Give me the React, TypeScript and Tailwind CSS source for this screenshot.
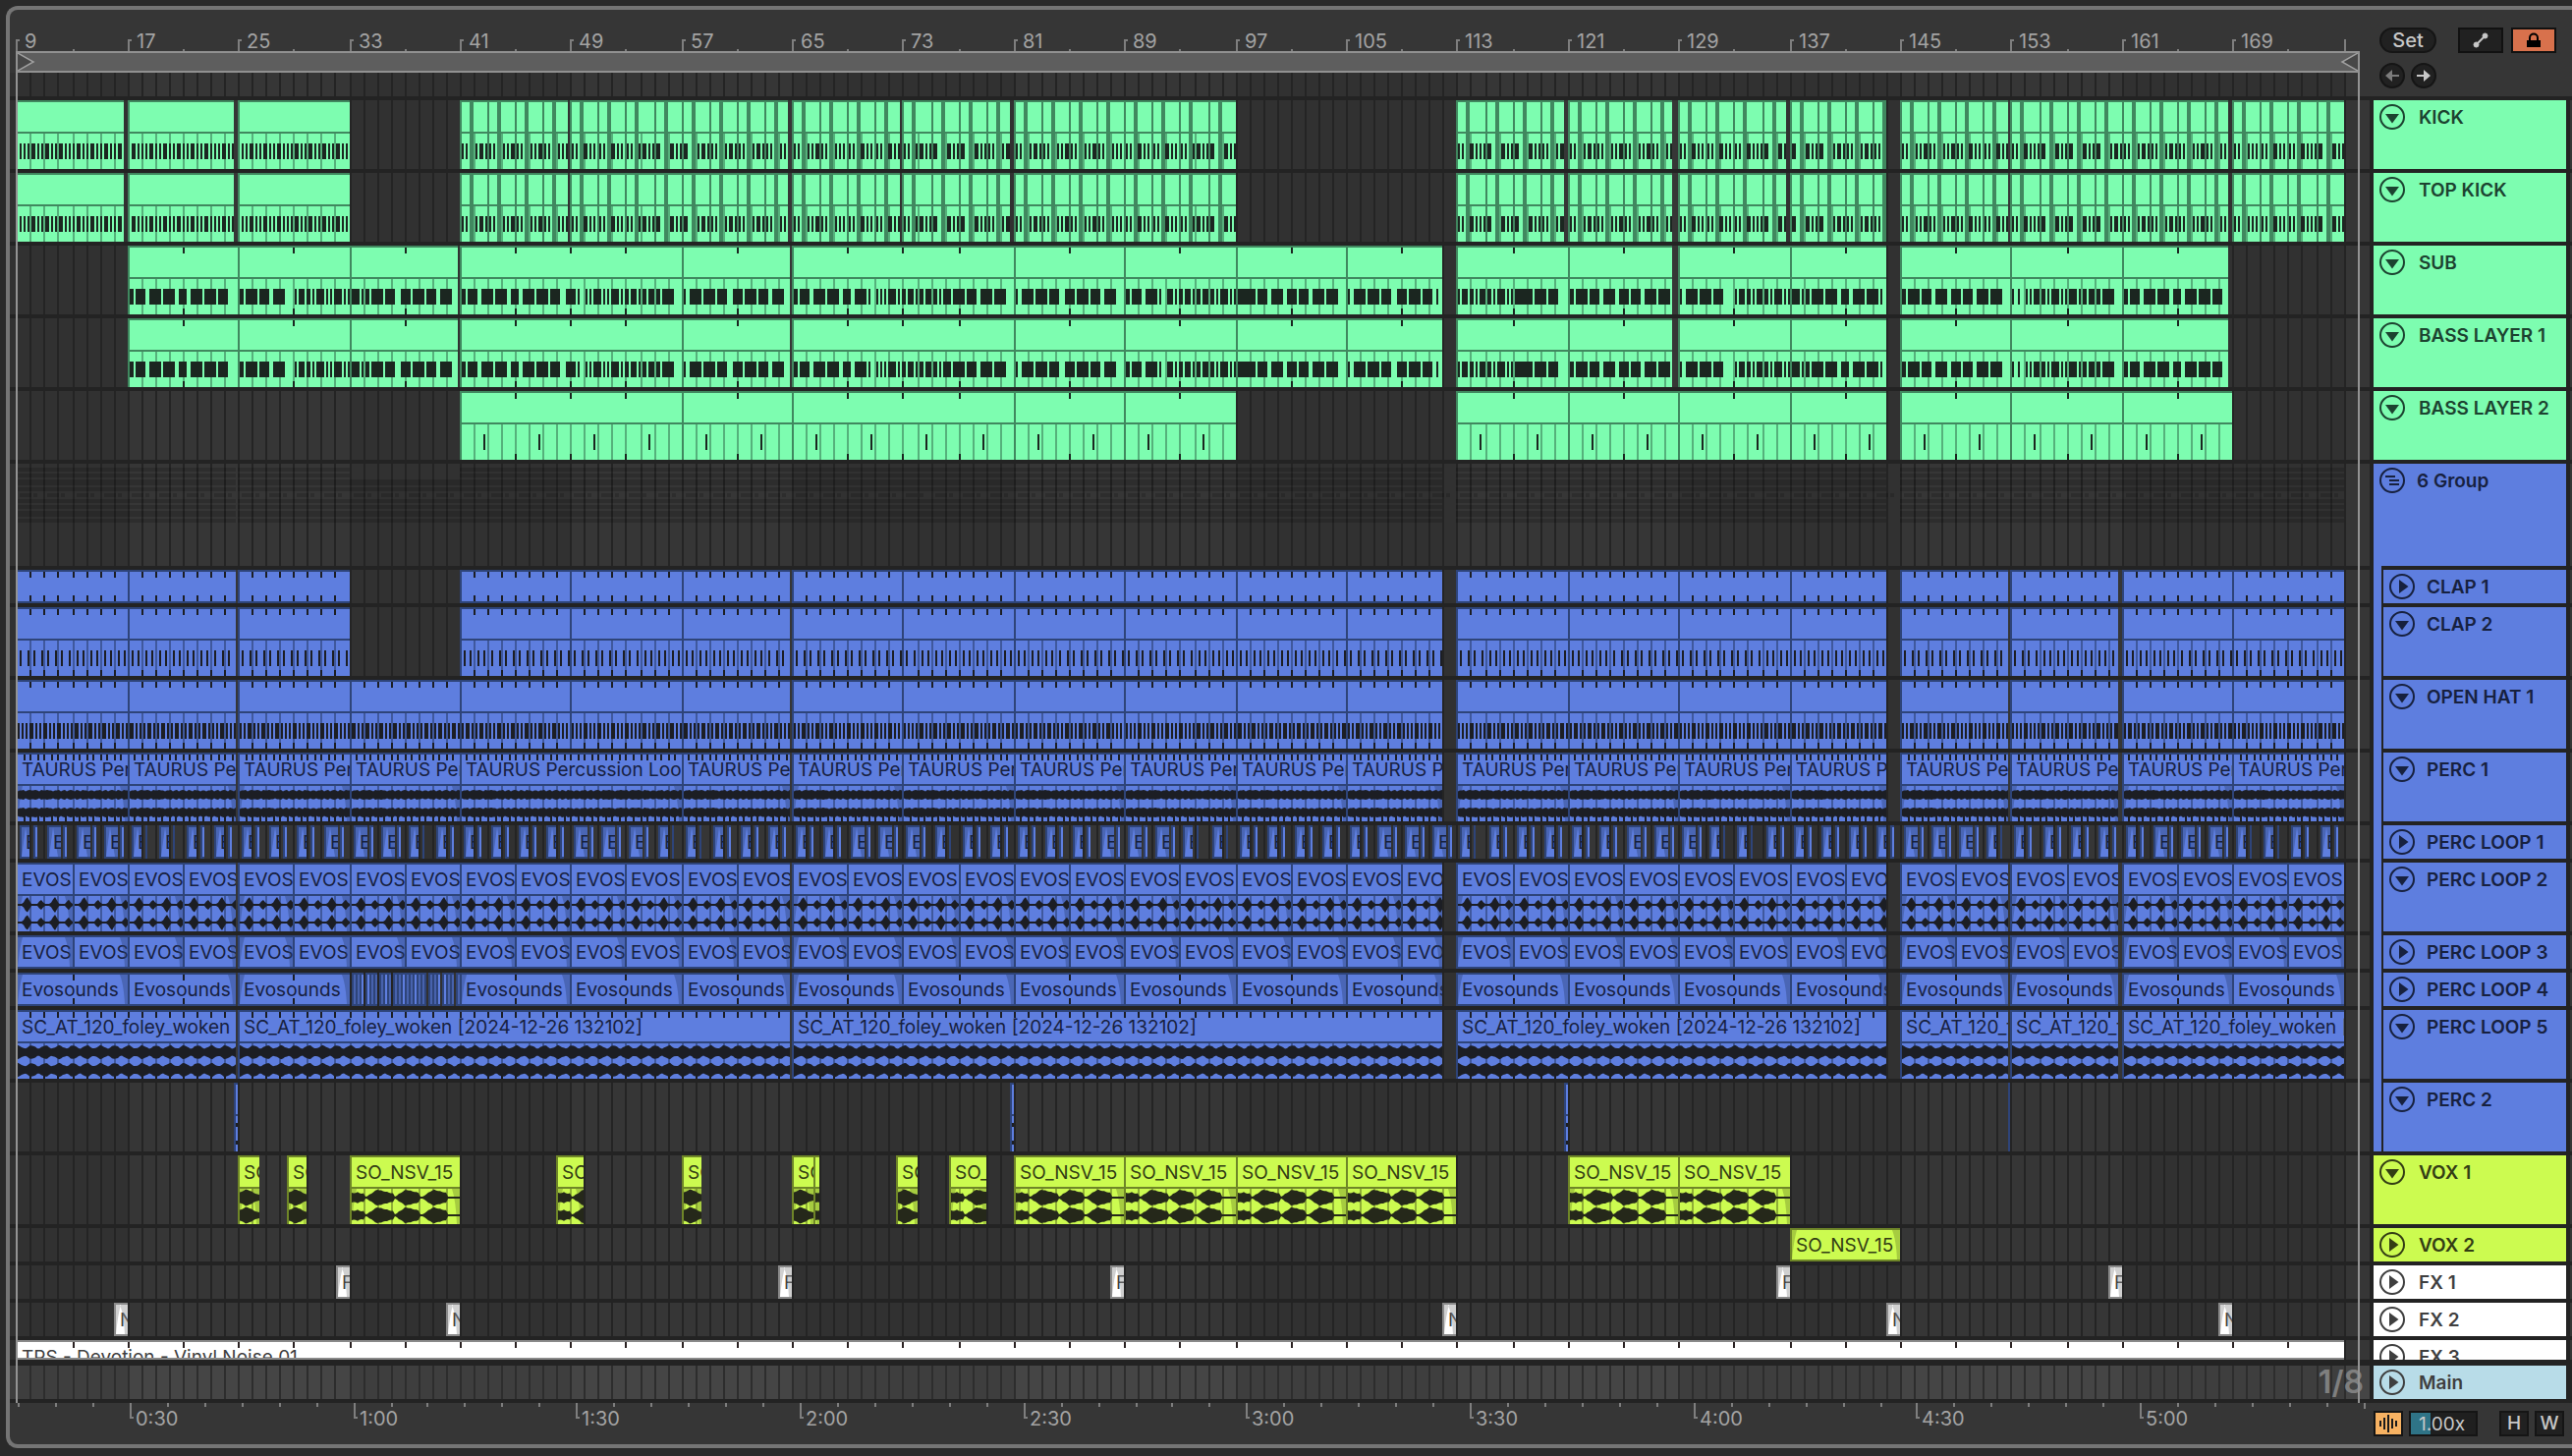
import { createContext, useContext, useLayoutEffect, useRef, useState } from 'react'
import type { ReactNode } from 'react'

type Kind = 'none' | 'kick' | 'chopped' | 'sub' | 'bass' | 'clap' | 'hat' | 'perc' | 'shaker' | 'foley' | 'vox' | 'stab'
type Rect = [number, number, number, number]

interface Theme {
  panel: string
  text: string
  edge: string
  edgeFill: string
  ink: string
  stroke: string
}

interface Run {
  bars: number[]
  kind?: Kind
}

interface Track {
  name: string
  theme: Theme
  height: string
  open?: boolean
  label?: string
  runs: Run[]
  kind?: Kind
  ticks?: number
  fades?: boolean
  extra?: 'slices' | 'chops' | 'overview'
}

const GREEN: Theme = { panel: 'bg-[#7dfdb0]', text: 'text-[#1c4330]', edge: 'border-[#40885f]', edgeFill: 'fill-[#40885f]', ink: 'fill-[#1b2620]', stroke: 'border-[#1c4330]' }
const BLUE: Theme = { panel: 'bg-[#5e7edf]', text: 'text-[#17213f]', edge: 'border-[#2e4479]', edgeFill: 'fill-[#2e4479]', ink: 'fill-[#1c1e24]', stroke: 'border-[#17213f]' }
const LIME: Theme = { panel: 'bg-[#ccfb50]', text: 'text-[#333d14]', edge: 'border-[#6f8628]', edgeFill: 'fill-[#6f8628]', ink: 'fill-[#25281a]', stroke: 'border-[#333d14]' }
const WHITE: Theme = { panel: 'bg-white', text: 'text-[#3f3f3f]', edge: 'border-[#8a8a8a]', edgeFill: 'fill-[#8a8a8a]', ink: 'fill-[#2b2222]', stroke: 'border-[#3f3f3f]' }
const PALE: Theme = { ...WHITE, panel: 'bg-[#b8dce8]' }

const TALL = 'h-[70px]'
const SHORT = 'h-[34px]'

// every `step` bars from a to b, closing on b
function steps(a: number, b: number, step: number): number[] {
  const out: number[] = []
  for (let v = a; v < b; v += step) out.push(v)
  return [...out, b]
}

function each(step: number): Run[] {
  return [
    { bars: steps(9, 24.85, step) },
    { bars: steps(25, 64.85, step) },
    { bars: steps(65, 112, step) },
    { bars: steps(113, 144, step) },
    { bars: steps(145, 152.8, step) },
    { bars: steps(153, 160.7, step) },
    { bars: steps(161, 177, step) },
  ]
}

const KICKS: Run[] = [
  { bars: [9, 16.75] },
  { bars: [17, 24.7] },
  { bars: [25, 33] },
  { bars: [41, 48.85], kind: 'chopped' },
  { bars: [49, 57, 64.7], kind: 'chopped' },
  { bars: [65, 72.85], kind: 'chopped' },
  { bars: [73, 80.7], kind: 'chopped' },
  { bars: [81, 89, 97], kind: 'chopped' },
  { bars: [113, 120.8], kind: 'chopped' },
  { bars: [121, 128.5], kind: 'chopped' },
  { bars: [129, 136.7], kind: 'chopped' },
  { bars: [137, 144], kind: 'chopped' },
  { bars: [145, 152.8], kind: 'chopped' },
  { bars: [153, 161, 168.7], kind: 'chopped' },
  { bars: [169, 177], kind: 'chopped' },
]

const SUBS: Run[] = [
  { bars: [17, 25, 33, 40.85] },
  { bars: [41, 57, 64.85] },
  { bars: [65, 81, 89, 97, 105, 112] },
  { bars: [113, 121, 128.5] },
  { bars: [129, 137, 144] },
  { bars: [145, 153, 161, 168.7] },
]

const CLAPS: Run[] = [{ bars: [9, 17, 24.85] }, { bars: [25, 33] }, { bars: steps(41, 64.85, 8) }, ...each(8).slice(2)]

const TRACKS: Track[] = [
  { name: 'KICK', theme: GREEN, height: TALL, open: true, runs: KICKS, kind: 'kick' },
  { name: 'TOP KICK', theme: GREEN, height: TALL, open: true, runs: KICKS, kind: 'kick' },
  { name: 'SUB', theme: GREEN, height: TALL, open: true, runs: SUBS, kind: 'sub', ticks: 4 },
  { name: 'BASS LAYER 1', theme: GREEN, height: TALL, open: true, runs: SUBS, kind: 'sub', ticks: 4 },
  {
    name: 'BASS LAYER 2',
    theme: GREEN,
    height: TALL,
    open: true,
    kind: 'bass',
    ticks: 4,
    runs: [{ bars: [41, 57, 65, 81, 89, 97] }, { bars: [113, 121, 129, 137, 144] }, { bars: [145, 153, 161, 169] }],
  },
]

const GROUP: Track = { name: '6 Group', theme: BLUE, height: 'h-[104px]', open: true, runs: [], extra: 'overview' }

const GROUPED: Track[] = [
  { name: 'CLAP 1', theme: BLUE, height: SHORT, runs: CLAPS, ticks: 1 },
  { name: 'CLAP 2', theme: BLUE, height: TALL, open: true, runs: CLAPS, kind: 'clap', ticks: 1 },
  { name: 'OPEN HAT 1', theme: BLUE, height: TALL, open: true, runs: each(8), kind: 'hat', ticks: 1 },
  {
    name: 'PERC 1',
    theme: BLUE,
    height: TALL,
    open: true,
    kind: 'perc',
    ticks: 0.5,
    label: 'TAURUS Percussion Loop',
    runs: [{ bars: [9, 17, 24.85] }, { bars: [25, 33, 41, 57, 64.85] }, ...each(8).slice(2)],
  },
  { name: 'PERC LOOP 1', theme: BLUE, height: SHORT, label: 'EVOS', runs: [], extra: 'chops' },
  { name: 'PERC LOOP 2', theme: BLUE, height: TALL, open: true, label: 'EVOS', runs: each(4), kind: 'shaker', fades: true },
  { name: 'PERC LOOP 3', theme: BLUE, height: SHORT, label: 'EVOS', runs: each(4), fades: true },
  { name: 'PERC LOOP 4', theme: BLUE, height: SHORT, label: 'Evosounds', runs: CLAPS, ticks: 4, fades: true, extra: 'slices' },
  {
    name: 'PERC LOOP 5',
    theme: BLUE,
    height: TALL,
    open: true,
    kind: 'foley',
    ticks: 1,
    label: 'SC_AT_120_foley_woken [2024-12-26 132102]',
    runs: [{ bars: [9, 24.85] }, { bars: [25, 64.85] }, { bars: [65, 112] }, { bars: [113, 144] }, { bars: [145, 152.8] }, { bars: [153, 160.7] }, { bars: [161, 177] }],
  },
  {
    name: 'PERC 2',
    theme: BLUE,
    height: TALL,
    open: true,
    kind: 'stab',
    runs: [{ bars: [24.72, 25] }, { bars: [80.72, 81] }, { bars: [120.72, 121] }, { bars: [152.85, 152.98] }],
  },
]

const TAIL: Track[] = [
  {
    name: 'VOX 1',
    theme: LIME,
    height: TALL,
    open: true,
    kind: 'vox',
    label: 'SO_NSV_15',
    runs: [
      { bars: [25, 26.54] },
      { bars: [28.53, 29.95] },
      { bars: [33, 41] },
      { bars: [48, 49.95] },
      { bars: [57, 58.46] },
      { bars: [65, 66.55, 67] },
      { bars: [72.5, 74.07] },
      { bars: [76.34, 79.03] },
      { bars: [81, 89, 97, 105, 113] },
      { bars: [121, 129, 137] },
    ],
  },
  { name: 'VOX 2', theme: LIME, height: SHORT, label: 'SO_NSV_15', runs: [{ bars: [137, 145] }], fades: true },
  {
    name: 'FX 1',
    theme: WHITE,
    height: SHORT,
    label: 'FX',
    fades: true,
    runs: [32.1, 64, 88, 136, 160].map((b) => ({ bars: [b, Math.floor(b) + 1] })),
  },
  {
    name: 'FX 2',
    theme: WHITE,
    height: SHORT,
    label: 'Noise',
    fades: true,
    runs: [16, 40, 112, 144, 168].map((b) => ({ bars: [b, b + 1] })),
  },
  { name: 'FX 3', theme: WHITE, height: 'h-[20px]', label: 'TPS - Devotion - Vinyl Noise 01', runs: [{ bars: [9, 177] }], ticks: 4 },
]

const BASE_WIDTH = 2402
const ScaleContext = createContext(1)

const snap = (v: number) => Math.round(v / 2) * 2

function useTimeline() {
  const scale = useContext(ScaleContext)
  const bar = 14.0985 * scale
  const x = (b: number) => snap(6.65 * scale + (b - 9) * bar)
  return { bar, x, scale }
}

const toPath = (rects: Rect[]) => rects.map(([x, y, w, h]) => `M${x} ${y}h${w}v${h}h${-w}z`).join('')

// note rectangles of a midi clip, relative to its left edge
function notes(kind: Kind, from: number, to: number, x: (b: number) => number): Rect[] {
  const left = x(from) + 2
  const right = x(to)
  const out: Rect[] = []
  const add = (px: number, w: number) => {
    const start = Math.max(px, left)
    const end = Math.min(px + w, right)
    if (end > start) out.push([start - left, 10, end - start, 16])
  }
  const first = Math.floor(from)
  for (let b = first; b < to; b++) {
    for (let q = 0; q < 4; q++) {
      const px = x(b + q / 4)
      if (kind === 'kick') add(px + 4, 2)
      if (kind === 'chopped' && ((b - first) % 2 === 1 || q !== 2)) add(px + 2, 2)
      if (kind === 'hat') add(px + 2, 2)
      if (kind === 'clap' && q % 2 === 0) add(px + 4, 2)
    }
    if (kind === 'bass' && (b - 1) % 4 === 0) add(x(b) + 24, 2)
    if (kind === 'sub') {
      const phase = (b - 29 + 207) % 20.7
      if (phase < 6) {
        for (let q = 0; q < 4; q++) add(x(b + q / 4) + 2, q === b % 4 ? 4 : 2)
      } else {
        add(x(b) - 4, b % 3 === 0 ? 8 : 10)
        if (b % 4 !== 0) add(x(b) + 8, 2)
      }
    }
  }
  return out
}

// half height of the wave at px
function level(kind: Kind, px: number, bar: number, length: number): number {
  const beat = (px % bar) / bar
  const jag = (px / 2) % 3 === 0 ? 1 : 0
  if (kind === 'perc') return (px % (bar / 2)) / (bar / 2) < 0.25 ? 3.5 : 4.5 + jag / 2
  if (kind === 'foley') return 5.2 + 1.6 * Math.cos(beat * Math.PI * 2) + jag / 2
  if (kind === 'shaker') {
    const big = Math.floor(px / bar) % 2 === 0
    return Math.max(1, (big ? 8.5 : 5.5) - Math.abs(beat * bar - 9.5) * (big ? 1.7 : 1.3))
  }
  if (kind === 'vox') {
    if (length < bar * 1.45 && length > 16) return Math.max(3, 8.5 - Math.abs(px - 7) * 0.5) + jag / 2
    if (px < 13) return 5 - Math.abs(px - 5) * 0.2 + jag
    for (const [start, peak, end] of [[15, 26, 42], [45, 55, 69], [73, 83, 97]]) {
      if (px >= start && px <= end) return (px < peak ? 8 - (peak - px) * 0.65 : 8 - (px - peak) * 0.25) + jag / 2
    }
    return 1
  }
  return 2
}

function waveform(kind: Kind, width: number, bar: number): string {
  return [9, 27]
    .map((mid) => {
      const top: string[] = []
      const bottom: string[] = []
      for (let px = 0; px <= width; px += 2) {
        const a = level(kind, px, bar, width)
        top.push(`${px} ${(mid - a).toFixed(1)}`)
        bottom.unshift(`${px} ${(mid + a).toFixed(1)}`)
      }
      return `M${top.join('L')}L${bottom.join('L')}z`
    })
    .join('')
}

function Clip({ track, kind, from, to, first }: { track: Track; kind: Kind; from: number; to: number; first: boolean }) {
  const { x, bar } = useTimeline()
  const { theme } = track
  const left = x(from)
  const width = Math.max(2, x(to) - left)
  const tall = track.height === TALL
  const audio = ['perc', 'shaker', 'foley', 'vox', 'stab'].includes(kind)

  const ticks: number[] = []
  if (track.ticks) {
    for (let b = from + track.ticks; b < to - 0.2; b += track.ticks) ticks.push(x(b) - left - 2)
  }
  const lines: Rect[] = []
  for (let b = Math.floor(from) + 1; b < to - 0.1; b++) lines.push([x(b) - left - 2, 0, 2, 36])

  const cuts: Rect[] = []
  if (kind === 'chopped') {
    for (let b = from; b < to; b += 2) {
      if (b > from) cuts.push([x(b) - left - 2, 0, 2, 68])
      cuts.push([x(b) - left + 8, 0, 4, 68])
    }
  }
  const inner = width - 2
  const fade = (h: number) => `M${inner - 8} 0Q${inner - 4} ${h / 3} ${inner - 3} ${h}H${inner}V0z${first ? `M0 0H5Q2 ${h / 3} 0 ${h}z` : ''}`

  return (
    <div
      className={`absolute top-0 h-full overflow-hidden border-t-2 border-l-2 ${tall ? '' : 'border-b-2'} ${theme.panel} ${theme.edge}`}
      style={{ left, width }}
    >
      <div className={`h-[30px] overflow-hidden pl-1 text-[19px] leading-8 whitespace-nowrap ${theme.text}`}>{track.label}</div>
      {tall ? (
        <div className={`h-[38px] border-t-2 ${theme.edge}`}>
          <svg className="block h-9 w-full overflow-hidden" aria-hidden="true">
            {track.fades || kind === 'vox' || kind === 'perc' ? <path className={theme.edgeFill} opacity={0.4} d={fade(36)} /> : null}
            <path className={theme.edgeFill} opacity={0.65} d={toPath(lines)} />
            <path className={theme.ink} d={audio ? waveform(kind, inner, bar) : toPath(notes(kind, from, to, x))} />
          </svg>
        </div>
      ) : null}
      <svg className="pointer-events-none absolute inset-0 h-full w-full" shapeRendering="crispEdges" aria-hidden="true">
        <path className={theme.edgeFill} d={toPath(cuts)} />
        <path className={theme.ink} d={toPath(ticks.map((t) => [t, 0, 2, 6]))} />
        <path className={theme.ink} d={toPath(ticks.map((t) => [t, tall ? 62 : 24, 2, 6]))} />
      </svg>
      {!tall && track.fades ? (
        <svg className="pointer-events-none absolute inset-0 h-full w-full" aria-hidden="true">
          <path className={theme.edgeFill} opacity={0.4} d={fade(30)} />
        </svg>
      ) : null}
    </div>
  )
}

function Chops({ track }: { track: Track }) {
  const { x } = useTimeline()
  const starts = steps(9, 175, 2)
  return (
    <>
      {starts.map((b, i) => {
        const left = x(b) + 4
        const wide = [1, 2, 3, 11, 12, 13].includes(i % 19)
        const thin = [4, 5, 14].includes(i % 19)
        return (
          <div key={b}>
            <div
              className="absolute top-0 h-full overflow-hidden border-t-2 border-b-2 border-l-2 border-[#2e4479] bg-[#4a66b4] pl-1 text-[19px] leading-8 text-[#17213f]"
              style={{ left, width: wide ? 14 : 10 }}
            >
              <svg className="absolute inset-0 h-full w-full fill-[#5e7edf]" aria-hidden="true">
                <path d="M4 0L9 30H0z" />
              </svg>
              <span className="relative">{track.label}</span>
            </div>
            <div
              className="absolute top-0 h-full border-t-2 border-b-2 border-l-2 border-[#2e4479] bg-[#5e7edf]"
              style={{ left: left + (wide ? 16 : 14), width: thin ? 2 : 4 }}
            />
          </div>
        )
      })}
    </>
  )
}

const SLICES = [[2, 12], [16, 12], [30, 12], [44, 34], [80, 12], [94, 12], [108, 6]]

function Slices() {
  const { x } = useTimeline()
  const left = x(33)
  return (
    <svg className="absolute top-0 h-full" style={{ left, width: x(41) - left }} shapeRendering="crispEdges" aria-hidden="true">
      {SLICES.map(([start, width]) => (
        <g key={start}>
          <rect className="fill-[#2e4479]" x={start} width={width} height="34" />
          {steps(start + 2, start + width, 4)
            .slice(0, -1)
            .map((px) => (
              <path key={px} className={px % 3 === 0 ? 'fill-[#5e7edf]' : 'fill-[#4762ad]'} d={`M${px} 2h2v30h-2z`} />
            ))}
        </g>
      ))}
    </svg>
  )
}

const OVERVIEW = [[4, 4], [10, 4], [16, 6], [24, 4], [36, 4], [42, 4], [48, 6], [56, 4]]

function Overview() {
  const { x } = useTimeline()
  const rects: Rect[] = []
  for (const [a, b] of [[9, 24.85], [25, 33], [33, 41], [41, 112], [113, 144], [145, 177]]) {
    for (const [y, h] of OVERVIEW) {
      if (a === 33 && y < 16) continue
      rects.push([x(a), y, x(b) - x(a), h])
    }
    for (let v = a; v < b; v += 2) {
      rects.push([x(v) + 4, 30, 12, 4])
      rects.push([x(v) + 18, 30, 4, 4])
    }
  }
  return (
    <svg className="absolute inset-0 h-full w-full fill-black/15" shapeRendering="crispEdges" aria-hidden="true">
      <path d={toPath(rects)} />
    </svg>
  )
}

function Grid({ main = false }: { main?: boolean }) {
  const { x } = useTimeline()
  const bands: Rect[] = []
  for (let b = 1; b < 177; b += 32) {
    const left = Math.max(0, x(b))
    bands.push([left, 0, x(b + 16) - left, 120])
  }
  const lines: Rect[] = []
  for (let b = 10; b <= 177; b++) lines.push([x(b), 0, 2, 120])
  return (
    <svg className="absolute inset-0 h-full w-full" shapeRendering="crispEdges" aria-hidden="true">
      <path className={main ? 'fill-[#3e3e3e]' : 'fill-[#313131]'} d={toPath(bands)} />
      <path className={main ? 'fill-[#2d2d2d]' : 'fill-[#242424]'} d={toPath(lines)} />
    </svg>
  )
}

function Lane({ height, main, children }: { height: string; main?: boolean; children?: ReactNode }) {
  return (
    <div className={`relative overflow-hidden ${height} ${main ? 'bg-[#454545]' : 'bg-[#363636]'}`}>
      <Grid main={main} />
      {children}
    </div>
  )
}

function TrackLane({ track }: { track: Track }) {
  return (
    <Lane height={track.height}>
      {track.runs.map((run) =>
        run.bars.slice(0, -1).map((from, i) => (
          <Clip key={from} track={track} kind={run.kind ?? track.kind ?? 'none'} from={from} to={run.bars[i + 1]} first={i === 0} />
        )),
      )}
      {track.extra === 'chops' ? <Chops track={track} /> : null}
      {track.extra === 'slices' ? <Slices /> : null}
      {track.extra === 'overview' ? <Overview /> : null}
    </Lane>
  )
}

function FoldIcon({ open, group }: { open?: boolean; group?: boolean }) {
  if (group) {
    return (
      <svg width="22" height="22" fill="none" stroke="currentColor" strokeWidth="2" aria-hidden="true">
        <path d="M4 7H14M8 11H18M8 15H18" />
      </svg>
    )
  }
  return (
    <svg width="22" height="22" fill="currentColor" aria-hidden="true">
      <path d={open ? 'M4 8H18L11 17.500z' : 'M8 4V18L17.500 11z'} />
    </svg>
  )
}

function TrackHeader({ track, group, inset }: { track: Track; group?: boolean; inset?: boolean }) {
  const { theme } = track
  return (
    <div className={`flex items-start overflow-hidden pl-1.5 ${inset || group ? 'gap-3' : 'gap-3.5'} ${track.height} ${theme.panel} ${theme.text}`}>
      <button
        type="button"
        aria-label={`Fold ${track.name}`}
        className={`mt-1 flex size-[26px] shrink-0 items-center justify-center rounded-full border-2 ${theme.stroke}`}
      >
        <FoldIcon open={track.open} group={group} />
      </button>
      <span className="text-[19px] leading-9 font-semibold whitespace-nowrap">{track.name}</span>
    </div>
  )
}

function BarRuler() {
  const { x } = useTimeline()
  const bars = steps(9, 169, 8)
  const ticks: Rect[] = [[x(177), 30, 2, 12]]
  for (const b of bars) {
    ticks.push([x(b), 30, 2, 12], [x(b), 30, 4, 2], [x(b + 4), 40, 2, 2])
  }
  return (
    <div className="relative h-[42px] overflow-hidden">
      <svg className="absolute inset-0 h-full w-full fill-[#7e7e7e]" shapeRendering="crispEdges" aria-hidden="true">
        <path d={toPath(ticks)} />
      </svg>
      {bars.map((b) => (
        <span key={b} className="absolute top-5 text-[20px] leading-6 text-[#a3a3a3]" style={{ left: x(b) + 9 }}>
          {b}
        </span>
      ))}
    </div>
  )
}

function LoopBrace() {
  return (
    <div className="relative mr-2.5 ml-1.5 h-[22px] border-2 border-[#919191] bg-[#5e5e5e]">
      <svg className="absolute top-0 left-0" width="18" height="18" fill="#474747" stroke="#a0a0a0" strokeWidth="1.500" aria-hidden="true">
        <path d="M0 0L16 9L0 18" />
      </svg>
      <svg className="absolute top-0 right-0" width="18" height="18" fill="#474747" stroke="#a0a0a0" strokeWidth="1.500" aria-hidden="true">
        <path d="M18 0L2 9L18 18" />
      </svg>
    </div>
  )
}

function TimeRuler() {
  const { scale } = useTimeline()
  const at = (i: number) => snap((8 + i * 37.9) * scale)
  const ticks: Rect[] = []
  const labels: { left: number; text: string }[] = []
  for (let i = 0; i < 64; i++) {
    if (i % 6 === 3 && i < 63) {
      const seconds = ((i - 3) / 6 + 1) * 30
      ticks.push([at(i), 0, 2, 16], [at(i), 14, 4, 2])
      labels.push({ left: at(i) + 6, text: `${Math.floor(seconds / 60)}:${String(seconds % 60).padStart(2, '0')}` })
    } else {
      ticks.push([at(i), 0, 2, i === 63 ? 6 : 4])
    }
  }
  return (
    <div className="relative h-[42px] min-w-0 flex-1 overflow-hidden">
      <svg className="absolute inset-0 h-full w-full fill-[#7e7e7e]" shapeRendering="crispEdges" aria-hidden="true">
        <path d={toPath(ticks)} />
      </svg>
      {labels.map((l) => (
        <span key={l.text} className="absolute top-1 text-[20px] leading-6 text-[#a3a3a3]" style={{ left: l.left }}>
          {l.text}
        </span>
      ))}
    </div>
  )
}

function TopControls() {
  return (
    <div className="w-[206px] shrink-0 pt-[18px] pr-4 pl-2.5">
      <div className="flex items-center">
        <button type="button" className="h-[26px] w-[58px] rounded-full border-2 border-[#151515] bg-[#212121] text-[20px] leading-[22px] font-medium text-[#c8c8c8]">
          Set
        </button>
        <button type="button" aria-label="Automation mode" className="ml-auto flex h-[26px] w-[46px] items-center justify-center border-2 border-[#111] bg-[#212121]">
          <svg width="16" height="16" fill="#c8c8c8" stroke="#c8c8c8" aria-hidden="true">
            <path strokeWidth="2" d="M3 13L13 3" />
            <circle cx="3.500" cy="12.500" r="2.500" />
            <circle cx="12.500" cy="3.500" r="2.500" />
          </svg>
        </button>
        <button type="button" aria-label="Lock envelopes" className="ml-2 flex h-[26px] w-[46px] items-center justify-center border-2 border-[#111] bg-[#d8714c]">
          <svg width="16" height="16" aria-hidden="true">
            <path d="M1 8H15V15H1z" />
            <path fill="none" stroke="black" strokeWidth="2" d="M4 8V5.500a4 4 0 0 1 8 0V8" />
          </svg>
        </button>
      </div>
      <div className="mt-2.5 flex gap-1.5">
        <button type="button" aria-label="Previous locator" className="flex size-[26px] items-center justify-center rounded-full border-2 border-[#151515] bg-[#212121] text-[#7c7c7c]">
          <Arrow />
        </button>
        <button type="button" aria-label="Next locator" className="flex size-[26px] items-center justify-center rounded-full border-2 border-[#151515] bg-[#212121] text-[#c8c8c8]">
          <Arrow next />
        </button>
      </div>
    </div>
  )
}

function Arrow({ next = false }: { next?: boolean }) {
  return (
    <svg width="16" height="14" fill="currentColor" aria-hidden="true">
      <path d={next ? 'M1 6H8V1L15 7L8 13V8H1z' : 'M15 6H8V1L1 7L8 13V8H15z'} />
    </svg>
  )
}

function BottomControls() {
  return (
    <div className="flex w-[206px] shrink-0 items-start pt-2 pr-2 pl-1">
      <button type="button" aria-label="Optimize arrangement" className="flex h-[26px] w-[30px] items-center justify-center border-2 border-[#151515] bg-[#f7b262]">
        <svg width="18" height="18" stroke="#1a1a1a" strokeWidth="2" aria-hidden="true">
          <path d="M1 6V12M5 3V15M9 0V18M13 4V14M17 6V12" />
        </svg>
      </button>
      <input
        aria-label="Vertical zoom"
        readOnly
        value="1.00x"
        className="ml-1.5 h-[26px] w-[70px] border-2 border-[#151515] bg-[#1f1f1f] bg-[linear-gradient(#2f7487,#2f7487)] bg-[length:20px_100%] bg-no-repeat pl-2 text-[19px] leading-[22px] text-[#c8c8c8]"
      />
      <button type="button" className="ml-auto h-[26px] w-[30px] border-2 border-[#151515] bg-[#212121] text-[19px] leading-[22px] font-medium text-[#c8c8c8]">
        H
      </button>
      <button type="button" className="ml-1.5 h-[26px] w-[30px] border-2 border-[#151515] bg-[#212121] text-[19px] leading-[22px] font-medium text-[#c8c8c8]">
        W
      </button>
    </div>
  )
}

export default function App() {
  const ref = useRef<HTMLDivElement>(null)
  const [width, setWidth] = useState(BASE_WIDTH)

  useLayoutEffect(() => {
    const node = ref.current
    if (!node) return
    const observer = new ResizeObserver(() => setWidth(node.clientWidth))
    observer.observe(node)
    setWidth(node.clientWidth)
    return () => observer.disconnect()
  }, [])

  const all = [...TRACKS, GROUP, ...GROUPED, ...TAIL]

  return (
    <ScaleContext.Provider value={width / BASE_WIDTH}>
      <div className="min-h-screen overflow-hidden bg-[#2a2a2a] py-1.5 pl-1.5 font-['Inter','Liberation_Sans',sans-serif]">
        <div className="rounded-l-xl border-y-4 border-l-4 border-[#757575] bg-[#363636]">
          <div className="flex">
            <div ref={ref} className="min-w-0 flex-1">
              <BarRuler />
              <LoopBrace />
              <Lane height="h-6" />
            </div>
            <TopControls />
          </div>

          <div className="flex gap-1 border-y-4 border-[#232323] bg-[#232323]">
            <div className="relative flex min-w-0 flex-1 flex-col gap-1">
              {all.map((t) => (
                <TrackLane key={t.name} track={t} />
              ))}
              <div className="pt-0.5">
                <Lane height={SHORT} main />
              </div>
              <span className="absolute right-1.5 bottom-0 text-[32px] leading-[34px] font-semibold text-[#7f7f7f]">1/8</span>
              <div className="absolute -top-7 -bottom-1 left-1.5 w-0.5 bg-[#939393]" />
              <div className="absolute -top-7 right-2.5 -bottom-1 w-0.5 bg-[#939393]" />
            </div>

            <div className="flex w-[196px] shrink-0 flex-col gap-1">
              {TRACKS.map((t) => (
                <TrackHeader key={t.name} track={t} />
              ))}
              <div className="bg-[#5e7edf]">
                <TrackHeader track={GROUP} group />
                <div className="ml-2 flex flex-col gap-1 border-t-4 border-l-2 border-[#232323] bg-[#232323]">
                  {GROUPED.map((t) => (
                    <TrackHeader key={t.name} track={t} inset />
                  ))}
                </div>
              </div>
              {TAIL.map((t) => (
                <TrackHeader key={t.name} track={t} />
              ))}
              <div className="pt-0.5">
                <TrackHeader track={{ name: 'Main', theme: PALE, height: SHORT, runs: [] }} />
              </div>
            </div>

            <div className="flex w-0.5 shrink-0 flex-col gap-1">
              {all.map((t) => (
                <div key={t.name} className={`bg-[#363636] ${t.height}`} />
              ))}
            </div>
          </div>

          <div className="flex">
            <TimeRuler />
            <BottomControls />
          </div>
        </div>
      </div>
    </ScaleContext.Provider>
  )
}
